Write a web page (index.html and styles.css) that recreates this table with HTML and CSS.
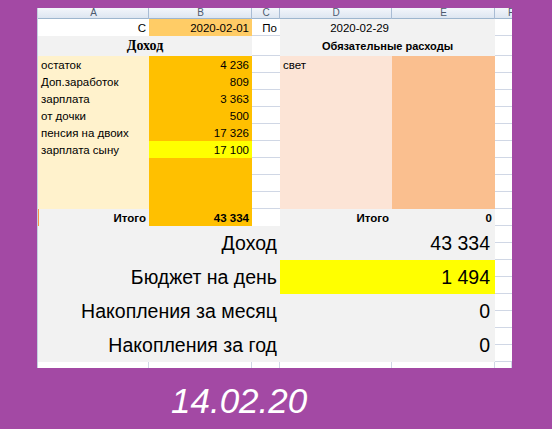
FILE: index.html
```html
<!DOCTYPE html>
<html lang="ru">
<head>
<meta charset="utf-8">
<title>Бюджет</title>
<link rel="stylesheet" href="styles.css">
</head>
<body>
<div class="sheet">
  <div class="hd">A</div><div class="hd">B</div><div class="hd">C</div><div class="hd">D</div><div class="hd">E</div><div class="hd hf">F</div>

  <div class="c w0 r">С</div><div class="c dt r">2020-02-01</div><div class="c w r">По</div><div class="c g r">2020-02-29</div><div class="c g"></div><div class="c w"></div>

  <div class="c g s2 t1">Доход</div><div class="c w"></div><div class="c g s2 t2">Обязательные расходы</div><div class="c w"></div>

  <div class="c ly">остаток</div><div class="c or r">4 236</div><div class="c w"></div><div class="c pe">свет</div><div class="c pk"></div><div class="c w"></div>
  <div class="c ly">Доп.заработок</div><div class="c or r">809</div><div class="c w"></div><div class="c pe"></div><div class="c pk"></div><div class="c w"></div>
  <div class="c ly">зарплата</div><div class="c or r">3 363</div><div class="c w"></div><div class="c pe"></div><div class="c pk"></div><div class="c w"></div>
  <div class="c ly">от дочки</div><div class="c or r">500</div><div class="c w"></div><div class="c pe"></div><div class="c pk"></div><div class="c w"></div>
  <div class="c ly">пенсия на двоих</div><div class="c or r">17 326</div><div class="c w"></div><div class="c pe"></div><div class="c pk"></div><div class="c w"></div>
  <div class="c ly">зарплата сыну</div><div class="c ye r">17 100</div><div class="c w"></div><div class="c pe"></div><div class="c pk"></div><div class="c w"></div>
  <div class="c ly"></div><div class="c or"></div><div class="c w"></div><div class="c pe"></div><div class="c pk"></div><div class="c w"></div>
  <div class="c ly"></div><div class="c or"></div><div class="c w"></div><div class="c pe"></div><div class="c pk"></div><div class="c w"></div>
  <div class="c ly"></div><div class="c or"></div><div class="c w"></div><div class="c pe"></div><div class="c pk"></div><div class="c w"></div>

  <div class="c g r b mark">Итого</div><div class="c or r b">43 334</div><div class="c w0"></div><div class="c g r b">Итого</div><div class="c g r b">0</div><div class="c w"></div>

  <div class="c g big lab">Доход</div><div class="c g big val">43 334</div><div class="c w"></div><div class="c w"></div>
  <div class="c g big lab">Бюджет на день</div><div class="c ye big val">1 494</div><div class="c w"></div><div class="c w"></div>
  <div class="c g big lab">Накопления за месяц</div><div class="c g big val">0</div><div class="c w"></div><div class="c w"></div>
  <div class="c g big lab">Накопления за год</div><div class="c g big val">0</div><div class="c w"></div><div class="c w"></div>

  <div class="c e"></div><div class="c e"></div><div class="c e"></div><div class="c e"></div><div class="c e"></div><div class="c e"></div>
</div>
<div class="stamp">14.02.20</div>
</body>
</html>
```

FILE: styles.css
```css
html, body {
  margin: 0;
  padding: 0;
}
body {
  background: #a349a4;
  width: 552px;
  height: 429px;
  overflow: hidden;
  font-family: "Liberation Sans", Arial, sans-serif;
}
.sheet {
  margin: 8px 0 0 37px;
  width: 474px;
  border-left: 1px solid #c3cfdf;
  background: #ffffff;
  display: grid;
  grid-template-columns: 111px 103px 28px 112px 103px 17px;
  grid-template-rows: 11px 17px 20px repeat(9, 17px) 17px repeat(8, 17px) 6px;
  font-size: 11.5px;
  color: #000;
}
.hd {
  background: linear-gradient(#f3f6fb, #dbe4f0);
  box-shadow: inset -1px 0 #a9bcd4, inset 0 -1px #9eb6ce;
  color: #4c5a6e;
  font-size: 10px;
  line-height: 10px;
  text-align: center;
  overflow: hidden;
}
.hf {
  text-align: left;
  padding-left: 13px;
  box-shadow: inset 0 -1px #9eb6ce;
}
.c {
  display: flex;
  align-items: center;
  padding: 0 3px;
  white-space: nowrap;
  overflow: hidden;
  min-width: 0;
}
.r { justify-content: flex-end; }
.b { font-weight: bold; }
.w { background: #fff; box-shadow: inset 0 -1px #d0d7e5; }
.w0 { background: #fff; }
.g { background: #f2f2f2; }
.dt { background: #ffcc66; }
.ly { background: #fff2cc; }
.or { background: #ffc000; }
.ye { background: #ffff00; }
.pe { background: #fce4d6; }
.pk { background: #fabf8f; }
.s2 { grid-column: span 2; justify-content: center; }
.t1 {
  font-family: "Liberation Serif", "Times New Roman", serif;
  font-weight: bold;
  font-size: 14px;
}
.t2 { font-weight: bold; font-size: 11px; }
.mark { box-shadow: inset 1px 0 #f79646; }
.big {
  grid-row: span 2;
  font-size: 19.5px;
  justify-content: flex-end;
}
.lab { grid-column: span 3; padding-right: 3px; }
.val { grid-column: span 2; padding-right: 5px; }
.e { background: #fff; box-shadow: inset -1px 0 #d0d7e5; }
.stamp {
  padding: 16px 0 0 171px;
  font-size: 35px;
  line-height: 34px;
  font-style: italic;
  color: #ffffff;
}
```
